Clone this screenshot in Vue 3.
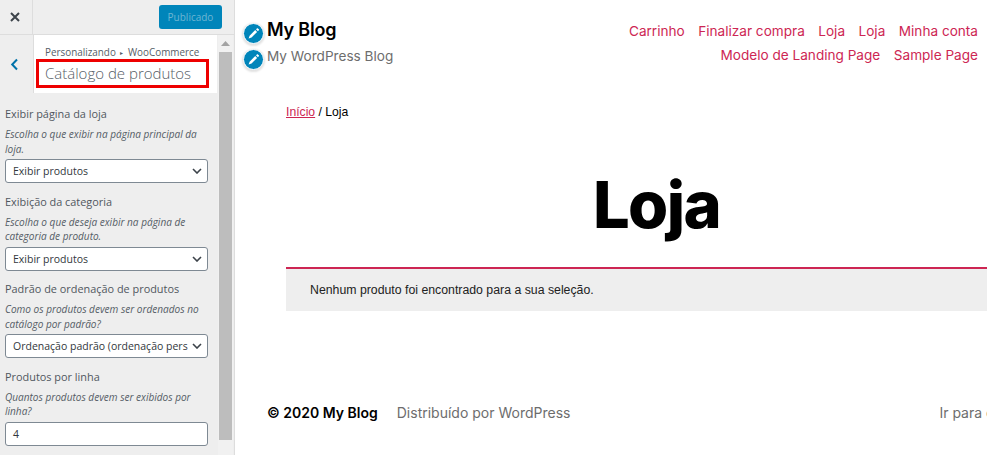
<template>
  <div class="customizer">
    <aside class="panel">
      <div class="topbar">
        <button class="close" aria-label="Fechar">
          <svg width="10" height="10" viewBox="0 0 10 10"><path d="M1 1l8 8M9 1l-8 8" stroke="#3c434a" stroke-width="2" fill="none" /></svg>
        </button>
        <div class="topbar-right">
          <button class="publish">Publicado</button>
        </div>
      </div>

      <div class="panel-body">
        <div class="panel-main">
          <div class="section-head">
            <button class="back" aria-label="Voltar">
              <svg width="9" height="13" viewBox="0 0 9 13"><path d="M7 1.5L2.2 6.5 7 11.5" stroke="#0073aa" stroke-width="2" fill="none" /></svg>
            </button>
            <div class="section-title">
              <div class="crumb">Personalizando <span class="crumb-sep">▸</span> WooCommerce</div>
              <div class="title-box">Catálogo de produtos</div>
            </div>
          </div>

          <div class="controls">
            <div v-for="c in controls" :key="c.label" class="control">
              <div class="control-label">{{ c.label }}</div>
              <div class="control-desc">{{ c.desc }}</div>
              <div v-if="c.select" class="select">
                <span class="select-text">{{ c.value }}</span>
                <svg width="10" height="6" viewBox="0 0 10 6"><path d="M1 1l4 4 4-4" stroke="#3c434a" stroke-width="1.6" fill="none" /></svg>
              </div>
              <div v-else class="input">{{ c.value }}</div>
            </div>
          </div>
        </div>

        <div class="scrollbar">
          <svg class="scroll-arrow" width="9" height="5" viewBox="0 0 9 5"><path d="M4.5 0L9 5H0z" fill="#a3a3a3" /></svg>
          <div class="scroll-thumb"></div>
        </div>
      </div>
    </aside>

    <main class="preview">
      <header class="site-header">
        <div class="branding">
          <div class="brand-row">
            <span class="edit-dot">
              <svg width="13" height="13" viewBox="0 0 13 13"><path d="M8.2 3.1l1.9 1.9-5.6 5.6-2.9 1 1-2.9zM9 2.3l.9-.9c.3-.3.7-.3 1 0l.9.9c.3.3.3.7 0 1l-.9.9z" fill="#fff" /></svg>
            </span>
            <span class="site-name">My Blog</span>
          </div>
          <div class="brand-row second">
            <span class="edit-dot">
              <svg width="13" height="13" viewBox="0 0 13 13"><path d="M8.2 3.1l1.9 1.9-5.6 5.6-2.9 1 1-2.9zM9 2.3l.9-.9c.3-.3.7-.3 1 0l.9.9c.3.3.3.7 0 1l-.9.9z" fill="#fff" /></svg>
            </span>
            <span class="site-desc">My WordPress Blog</span>
          </div>
        </div>
        <nav class="site-nav">
          <a v-for="(item, i) in menu" :key="i">{{ item }}</a>
        </nav>
      </header>

      <div class="content">
        <div class="breadcrumb"><a>Início</a> / Loja</div>
        <h1 class="page-title">Loja</h1>
        <div class="notice">Nenhum produto foi encontrado para a sua seleção.</div>
      </div>

      <footer class="site-footer">
        <span class="copy">© 2020 My Blog</span>
        <span class="powered">Distribuído por WordPress</span>
        <span class="to-top">Ir para o</span>
      </footer>
    </main>
  </div>
</template>

<script setup>
const controls = [
  {
    label: 'Exibir página da loja',
    desc: 'Escolha o que exibir na página principal da loja.',
    select: true,
    value: 'Exibir produtos'
  },
  {
    label: 'Exibição da categoria',
    desc: 'Escolha o que deseja exibir na página de categoria de produto.',
    select: true,
    value: 'Exibir produtos'
  },
  {
    label: 'Padrão de ordenação de produtos',
    desc: 'Como os produtos devem ser ordenados no catálogo por padrão?',
    select: true,
    value: 'Ordenação padrão (ordenação pers'
  },
  {
    label: 'Produtos por linha',
    desc: 'Quantos produtos devem ser exibidos por linha?',
    select: false,
    value: '4'
  }
]

const menu = [
  'Carrinho',
  'Finalizar compra',
  'Loja',
  'Loja',
  'Minha conta',
  'Modelo de Landing Page',
  'Sample Page'
]
</script>

<style>
html,
body {
  margin: 0;
  background: #fff;
  overflow: hidden;
}
</style>

<style scoped>
.customizer {
  display: flex;
  width: 987px;
  height: 455px;
  overflow: hidden;
  font-family: "Open Sans", "Noto Sans", sans-serif;
}

.panel {
  width: 235px;
  flex-shrink: 0;
  display: flex;
  flex-direction: column;
  background: #eeeeee;
  border-right: 1px solid #dddddd;
  box-sizing: border-box;
}

.topbar {
  height: 35px;
  flex-shrink: 0;
  display: flex;
  align-items: center;
  border-bottom: 1px solid #dddddd;
  box-sizing: border-box;
}

.close {
  width: 33px;
  height: 34px;
  padding: 0 3px 0 0;
  border: 0;
  border-right: 1px solid #dddddd;
  background: transparent;
  display: flex;
  align-items: center;
  justify-content: center;
}

.topbar-right {
  flex: 1;
  display: flex;
  justify-content: flex-end;
  padding-right: 12px;
}

.publish {
  width: 63px;
  height: 24px;
  padding: 0;
  border: 0;
  border-radius: 3px;
  background: #0085ba;
  color: #6db5d3;
  font-family: inherit;
  font-size: 10px;
}

.panel-body {
  flex: 1;
  display: flex;
  min-height: 0;
}

.panel-main {
  width: 218px;
  flex-shrink: 0;
  overflow: hidden;
}

.section-head {
  display: flex;
  height: 58px;
  margin-bottom: 13px;
}

.back {
  width: 33px;
  height: 58px;
  padding: 0 5px 0 0;
  border: 0;
  background: transparent;
  display: flex;
  align-items: center;
  justify-content: center;
}

.section-title {
  flex: 1;
  background: #fff;
  padding: 12px 0 0 2px;
  margin-right: 1px;
  border-left: 1px solid #dddddd;
  color: #555d66;
}

.crumb {
  padding-left: 9px;
  font-size: 9.9px;
  line-height: 11px;
  white-space: nowrap;
}

.crumb-sep {
  font-size: 6px;
  vertical-align: 1px;
  margin: 0 2px;
}

.title-box {
  width: 161px;
  height: 23px;
  padding-left: 6px;
  border: 3px solid #ee0000;
  font-size: 15px;
  line-height: 23px;
  font-weight: 300;
  white-space: nowrap;
}

.controls {
  padding: 0 5px;
}

.control {
  margin-bottom: 10.67px;
}

.control-label {
  color: #50575e;
  font-size: 10.9px;
  font-weight: 500;
  line-height: 15px;
  margin-bottom: 6px;
}

.control-desc {
  color: #555d66;
  font-size: 10.05px;
  font-style: italic;
  line-height: 14.5px;
  margin-bottom: 3px;
}

.select,
.input {
  width: 203px;
  height: 24px;
  box-sizing: border-box;
  background: #fff;
  border: 1px solid #7e8993;
  border-radius: 3px;
  padding: 0 5px 0 7px;
  color: #32373c;
  font-size: 10.5px;
  line-height: 22px;
}

.select {
  display: flex;
  align-items: center;
  justify-content: space-between;
  gap: 1px;
}

.select-text {
  flex: 1;
  overflow: hidden;
  white-space: nowrap;
}

.scrollbar {
  width: 15px;
  flex-shrink: 0;
  display: flex;
  flex-direction: column;
  align-items: center;
  padding-top: 6px;
  padding-bottom: 15px;
  box-sizing: border-box;
  background: #f1f1f1;
}

.scroll-arrow {
  margin-bottom: 6px;
  display: block;
}

.scroll-thumb {
  width: 13px;
  flex: 1;
  background: #bdbdbd;
}

.preview {
  flex: 1;
  min-width: 0;
  overflow: hidden;
  background: #fff;
  font-family: Inter, "Liberation Sans", sans-serif;
}

.site-header {
  display: flex;
  justify-content: space-between;
  padding: 17px 9px 0 8px;
  height: 76px;
  box-sizing: border-box;
}

.branding {
  display: flex;
  flex-direction: column;
}

.brand-row {
  display: flex;
  align-items: flex-start;
  gap: 3px;
  height: 25px;
}

.brand-row.second {
  height: 27px;
  margin-top: 1px;
}

.edit-dot {
  width: 19px;
  height: 19px;
  margin-top: 6px;
  border-radius: 50%;
  background: #0085ba;
  border: 1px solid #fff;
  box-shadow: 0 1px 2px 1px #e2e2e2;
  display: flex;
  align-items: center;
  justify-content: center;
  flex-shrink: 0;
}

.site-name {
  color: #000;
  font-size: 18px;
  font-weight: 600;
  line-height: 25px;
  letter-spacing: -0.2px;
}

.site-desc {
  color: #6d6d6d;
  font-size: 13.6px;
  line-height: 27px;
}

.site-nav {
  width: 370px;
  display: flex;
  flex-wrap: wrap;
  justify-content: flex-end;
  align-content: flex-start;
  gap: 4px 13.5px;
  padding-top: 4px;
}

.site-nav a {
  color: #cd2653;
  font-size: 13.6px;
  line-height: 20px;
}

.content {
  padding-left: 51px;
  width: 1000px;
}

.breadcrumb {
  margin-top: 27px;
  color: #000;
  font-family: "Liberation Sans", Arial, sans-serif;
  font-size: 12.2px;
  line-height: 18px;
}

.breadcrumb a {
  color: #cd2653;
  text-decoration: underline;
}

.page-title {
  margin: 45px 0 0;
  width: 741px;
  text-align: center;
  color: #000;
  font-size: 65px;
  font-weight: 800;
  line-height: 78px;
  letter-spacing: -1.6px;
}

.notice {
  margin-top: 23px;
  height: 42px;
  padding-left: 24px;
  background: #eeeeee;
  border-top: 2px solid #cd2653;
  color: #222;
  font-family: "Liberation Sans", Arial, sans-serif;
  font-size: 12.3px;
  line-height: 42px;
}

.site-footer {
  display: flex;
  align-items: center;
  margin-top: 92px;
  padding-left: 32px;
  width: 1000px;
  font-size: 14px;
  line-height: 20px;
}

.copy {
  color: #000;
  font-weight: 600;
}

.powered {
  margin-left: 19px;
  color: #6d6d6d;
}

.to-top {
  margin-left: 369px;
  color: #6d6d6d;
  white-space: nowrap;
}
</style>
